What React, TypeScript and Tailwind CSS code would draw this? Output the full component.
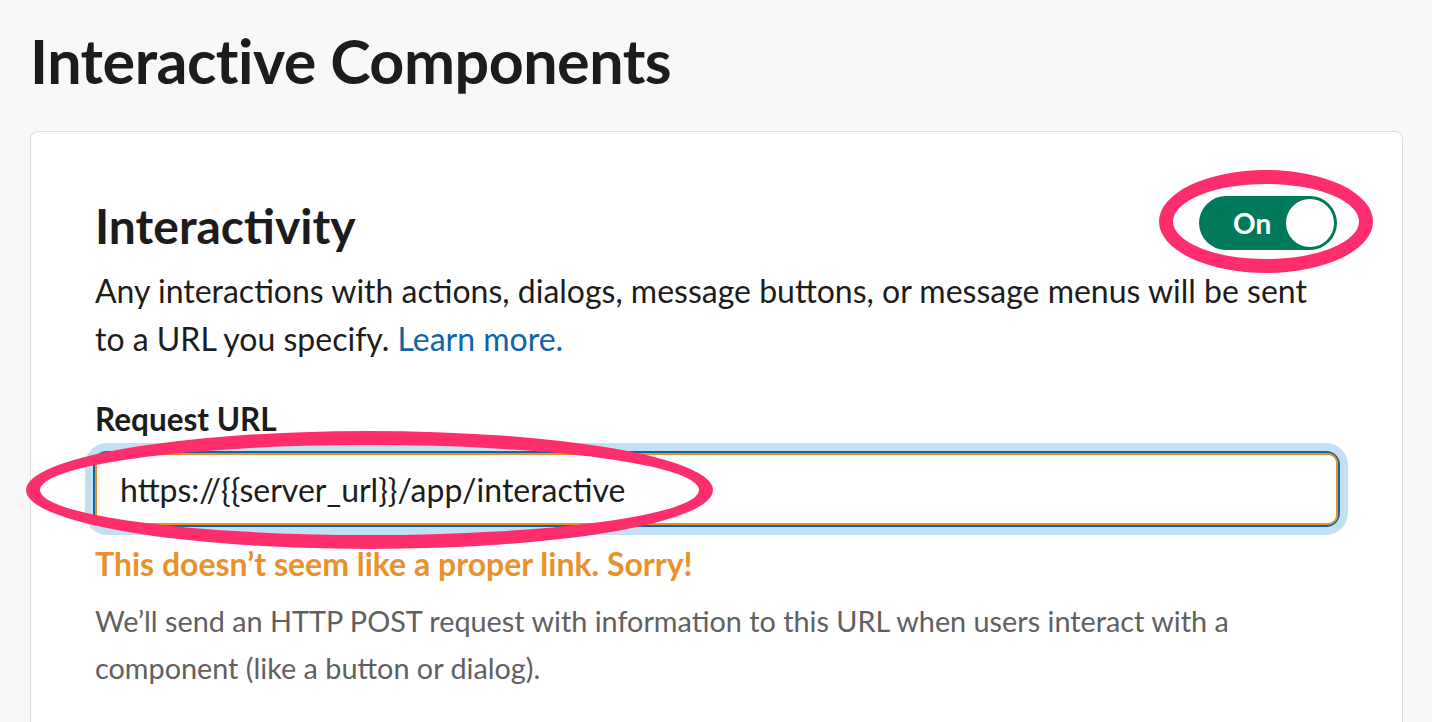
export default function App() {
  return (
    <div className="relative min-h-[722px] bg-[#f8f8f8] pl-[30px] pr-[29px] font-['Lato','Noto_Sans',sans-serif] text-[#1d1c1d]">
      {/* Page title */}
      <h1 className="pt-[21px] text-[61px] font-bold leading-[80px] tracking-[-0.5px]">Interactive Components</h1>

      {/* Card */}
      <div className="mt-[30px] rounded-t-[8px] border border-b-0 border-[#dddddd] bg-white px-[64px] pt-[64px] pb-[40px]">
        <div className="flex items-start justify-between">
          <h2 className="text-[48px] font-bold leading-[60px]">Interactivity</h2>
          <button className="mr-[1px] flex h-[54px] w-[138px] items-center rounded-full bg-[#007a5a] pl-[34px] pr-[3px]">
            <span className="text-[28px] font-bold leading-none text-white">On</span>
            <span className="ml-auto h-[48px] w-[48px] rounded-full bg-white" />
          </button>
        </div>

        <p className="mt-[11px] text-[32px] leading-[48px]">
          Any interactions with actions, dialogs, message buttons, or message menus will be sent to a URL you specify.{' '}
          <a className="text-[#1264a3]">Learn more.</a>
        </p>

        <label className="mt-[38px] block text-[31.5px] font-bold leading-[36px]">Request URL</label>
        <div className="mt-[16px] rounded-[12px] shadow-[0_0_0_2px_#1264a3,0_0_0_10px_#c1e1f2]">
          <input
            readOnly
            value="https://{{server_url}}/app/interactive"
            className="block h-[72px] w-full rounded-[10px] border-2 border-[#e8912d] bg-white px-[23px] text-[32px] text-[#1d1c1d] outline-none"
          />
        </div>

        <p className="mt-[21px] text-[32px] font-bold leading-[36px] text-[#e8912d]">This doesn’t seem like a proper link. Sorry!</p>
        <p className="mt-[16px] text-[28.8px] leading-[47px] text-[#616061]">
          We’ll send an HTTP POST request with information to this URL when users interact with a component (like a button or dialog).
        </p>
      </div>

      {/* Annotation ellipses */}
      <div className="pointer-events-none absolute left-[1159px] top-[170px] h-[103px] w-[214px] rounded-[50%] border-[14px] border-[#fe2d6b]" />
      <div className="pointer-events-none absolute left-[26px] top-[431px] h-[118px] w-[687px] rounded-[50%] border-[14px] border-[#fe2d6b]" />
    </div>
  )
}
